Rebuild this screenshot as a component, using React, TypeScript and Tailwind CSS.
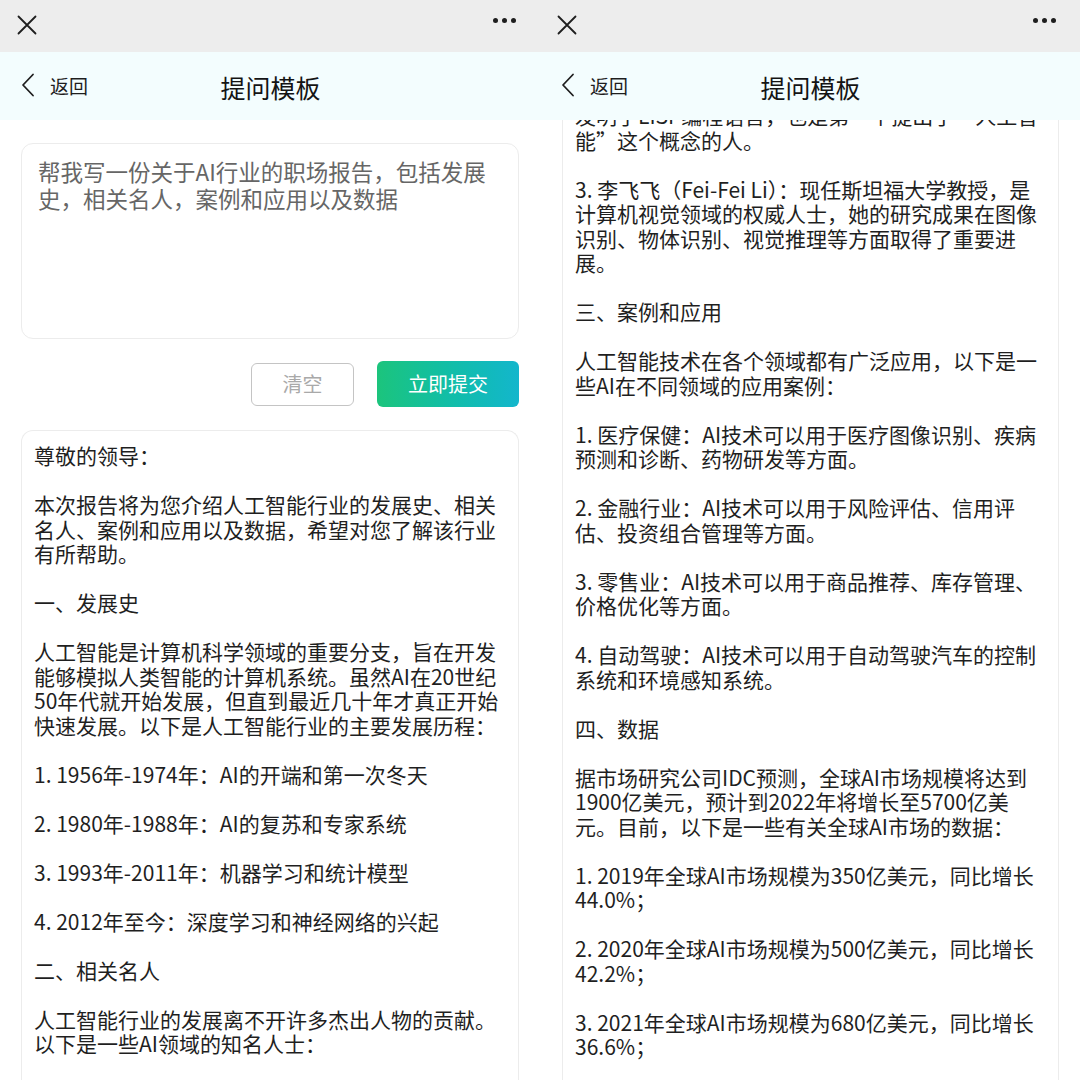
import React from "react";

const leftLines = [
  "尊敬的领导：",
  "",
  "本次报告将为您介绍人工智能行业的发展史、相关",
  "名人、案例和应用以及数据，希望对您了解该行业",
  "有所帮助。",
  "",
  "一、发展史",
  "",
  "人工智能是计算机科学领域的重要分支，旨在开发",
  "能够模拟人类智能的计算机系统。虽然AI在20世纪",
  "50年代就开始发展，但直到最近几十年才真正开始",
  "快速发展。以下是人工智能行业的主要发展历程：",
  "",
  "1. 1956年-1974年：AI的开端和第一次冬天",
  "",
  "2. 1980年-1988年：AI的复苏和专家系统",
  "",
  "3. 1993年-2011年：机器学习和统计模型",
  "",
  "4. 2012年至今：深度学习和神经网络的兴起",
  "",
  "二、相关名人",
  "",
  "人工智能行业的发展离不开许多杰出人物的贡献。",
  "以下是一些AI领域的知名人士：",
];

const rightLines = [
  "发明了LISP编程语言，也是第一个提出了“人工智",
  "能”这个概念的人。",
  "",
  "3. 李飞飞（Fei-Fei Li）：现任斯坦福大学教授，是",
  "计算机视觉领域的权威人士，她的研究成果在图像",
  "识别、物体识别、视觉推理等方面取得了重要进",
  "展。",
  "",
  "三、案例和应用",
  "",
  "人工智能技术在各个领域都有广泛应用，以下是一",
  "些AI在不同领域的应用案例：",
  "",
  "1. 医疗保健：AI技术可以用于医疗图像识别、疾病",
  "预测和诊断、药物研发等方面。",
  "",
  "2. 金融行业：AI技术可以用于风险评估、信用评",
  "估、投资组合管理等方面。",
  "",
  "3. 零售业：AI技术可以用于商品推荐、库存管理、",
  "价格优化等方面。",
  "",
  "4. 自动驾驶：AI技术可以用于自动驾驶汽车的控制",
  "系统和环境感知系统。",
  "",
  "四、数据",
  "",
  "据市场研究公司IDC预测，全球AI市场规模将达到",
  "1900亿美元，预计到2022年将增长至5700亿美",
  "元。目前，以下是一些有关全球AI市场的数据：",
  "",
  "1. 2019年全球AI市场规模为350亿美元，同比增长",
  "44.0%；",
  "",
  "2. 2020年全球AI市场规模为500亿美元，同比增长",
  "42.2%；",
  "",
  "3. 2021年全球AI市场规模为680亿美元，同比增长",
  "36.6%；",
];

function TopBar() {
  return (
    <div className="h-[52px] bg-[#ededed] flex items-center justify-between pl-[17px] pr-[24px] shrink-0">
      <svg width="20" height="20" viewBox="0 0 20 20" className="mt-[-2px]">
        <path d="M1.5 1.5 L18.5 18.5 M18.5 1.5 L1.5 18.5" stroke="#1e1e1e" strokeWidth="1.8" strokeLinecap="round" />
      </svg>
      <div className="flex items-center gap-[4px] mt-[-12px]">
        <span className="w-[5px] h-[5px] rounded-full bg-[#1e1e1e]" />
        <span className="w-[5px] h-[5px] rounded-full bg-[#1e1e1e]" />
        <span className="w-[5px] h-[5px] rounded-full bg-[#1e1e1e]" />
      </div>
    </div>
  );
}

function Header() {
  return (
    <div className="h-[68px] bg-[#f3fdfe] relative flex items-center shrink-0 z-10">
      <div className="flex items-center pl-[21px] mt-[-2px]">
        <svg width="14" height="24" viewBox="0 0 14 24">
          <path d="M12 1.5 L2 12 L12 22.5" stroke="#1e1e1e" strokeWidth="1.8" fill="none" strokeLinecap="round" strokeLinejoin="round" />
        </svg>
        <span className="ml-[15px] text-[19px] text-[#1e1e1e] leading-none">返回</span>
      </div>
      <div className="absolute inset-0 flex items-center justify-center pointer-events-none">
        <span className="text-[25px] text-[#141414] leading-none ml-[1px] mt-[3px]">提问模板</span>
      </div>
    </div>
  );
}

function Lines({ lines }: { lines: string[] }) {
  return (
    <div className="text-[21px] text-[#1f1f1f]">
      {lines.map((l, i) => (
        <div key={i} className="h-[24.5px] leading-[24.5px] whitespace-nowrap">
          {l}
        </div>
      ))}
    </div>
  );
}

function LeftPanel() {
  return (
    <div className="w-[540px] h-[1080px] flex flex-col overflow-hidden bg-white">
      <TopBar />
      <Header />
      <div className="flex-1 overflow-hidden flex flex-col">
        <div className="mx-[21px] mt-[23px] h-[196px] rounded-[12px] border border-[#ececec] bg-white pl-[16px] pr-[12px] pt-[14px]">
          <div className="text-[22.5px] leading-[27px] text-[#666666]">
            <div className="whitespace-nowrap">帮我写一份关于AI行业的职场报告，包括发展</div>
            <div className="whitespace-nowrap">史，相关名人，案例和应用以及数据</div>
          </div>
        </div>
        <div className="flex justify-end items-center gap-[23px] mr-[21px] mt-[22px]">
          <button className="w-[103px] h-[43px] rounded-[6px] border border-[#c4c4c4] bg-white text-[20px] text-[#a9a9a9] flex items-center justify-center">
            清空
          </button>
          <button className="w-[142px] h-[46px] rounded-[6px] bg-gradient-to-r from-[#1cc47c] to-[#14b6cc] text-[20px] text-white flex items-center justify-center">
            立即提交
          </button>
        </div>
        <div className="mx-[21px] mt-[23px] flex-1 rounded-t-[12px] border border-b-0 border-[#ececec] bg-white pl-[12px] pt-[12px] overflow-hidden">
          <Lines lines={leftLines} />
        </div>
      </div>
    </div>
  );
}

function RightPanel() {
  return (
    <div className="w-[540px] h-[1080px] flex flex-col overflow-hidden bg-white">
      <TopBar />
      <Header />
      <div className="flex-1 overflow-hidden">
        <div className="ml-[22px] mr-[21px] mt-[-30px] h-[1200px] rounded-t-[12px] border border-b-0 border-[#ececec] bg-white pl-[12px] pt-[12px]">
          <Lines lines={rightLines} />
        </div>
      </div>
    </div>
  );
}

export default function App() {
  return (
    <div className="w-[1080px] h-[1080px] flex overflow-hidden bg-white font-['Noto_Sans_CJK_SC','Noto_Sans',sans-serif]">
      <LeftPanel />
      <RightPanel />
    </div>
  );
}
